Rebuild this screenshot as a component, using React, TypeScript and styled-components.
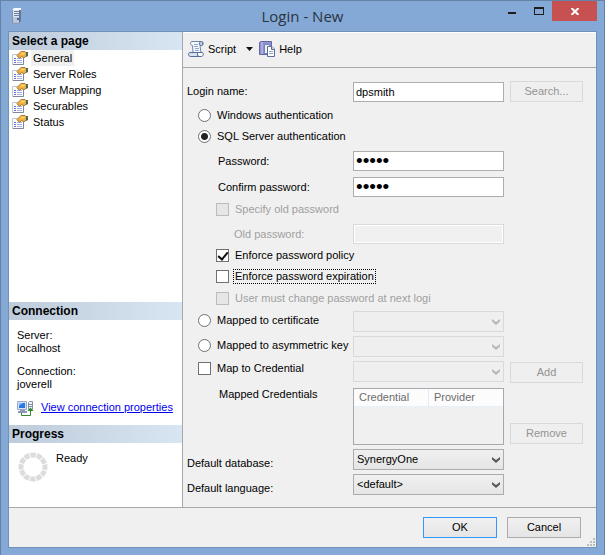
import React, { useState } from "react";
import styled, { createGlobalStyle, css } from "styled-components";

const GlobalStyle = createGlobalStyle`
  * { box-sizing: border-box; }
  body {
    margin: 0;
    background: #84a9d6;
    font-family: "Liberation Sans", Arial, sans-serif;
    font-size: 11px;
    line-height: 13px;
    color: #000;
  }
  button, input, select { font: inherit; color: inherit; margin: 0; }
  svg { flex: none; }
`;

const Window = styled.main`
  display: flex;
  flex-direction: column;
  min-height: 100vh;
  padding: 0 7px 7px;
  background: #84a9d6;
  border: 1px solid #6583a8;
`;

const TitleBar = styled.header`
  display: grid;
  grid-template-columns: 1fr auto 1fr;
  height: 30px;
`;

const AppIcon = styled.div`
  padding: 6px 0 0 4px;
`;

const Title = styled.h1`
  margin: 0;
  font: 400 15px/30px "Open Sans", "Noto Sans", sans-serif;
  color: #2b3440;
`;

const Controls = styled.div`
  display: flex;
  justify-content: flex-end;
  align-items: flex-start;
`;

const ControlButton = styled.button<{ $close?: boolean }>`
  display: grid;
  place-items: center;
  width: ${(p) => (p.$close ? 45 : 27)}px;
  height: 20px;
  padding: 0;
  border: 0;
  background: ${(p) => (p.$close ? "#c75050" : "transparent")};
`;

const Client = styled.div`
  flex: 1;
  display: flex;
  flex-direction: column;
  background: #f0f0f0;
  border: 1px solid #7191b8;
`;

const Body = styled.div`
  flex: 1;
  display: grid;
  grid-template-columns: 174px 1fr;
  border-bottom: 1px solid #a7a7ae;
`;

const Sidebar = styled.aside`
  display: flex;
  flex-direction: column;
  background: #fff;
  border-right: 1px solid #a7a7ae;
`;

const SectionHead = styled.h2`
  margin: 0;
  padding-left: 3px;
  font-size: 12px;
  font-weight: 700;
  line-height: 18px;
  background: linear-gradient(90deg, #bdcbda, #d8e6f4);
`;

const PageList = styled.ul`
  flex: 1;
  margin: 0;
  padding: 0 0 0 3px;
  list-style: none;
`;

const PageItem = styled.li`
  display: flex;
  gap: 3px;
  height: 16px;
`;

const PageButton = styled.button<{ $active?: boolean }>`
  padding: 0 2px;
  border: 0;
  line-height: 16px;
  background: ${(p) => (p.$active ? "#f0f0f0" : "transparent")};
`;

const ConnectionInfo = styled.div`
  height: 105px;
  padding: 9px 8px 0;
`;

const Pair = styled.dl`
  margin: 0 0 10px;
  dd { margin: 0; }
`;

const LinkRow = styled.div`
  display: flex;
  gap: 7px;
  white-space: nowrap;
`;

const PropsLink = styled.a`
  color: #0000f0;
`;

const ProgressInfo = styled.div`
  display: flex;
  gap: 8px;
  height: 64px;
  padding: 9px 9px 0;
`;

const Panel = styled.section`
  display: flex;
  flex-direction: column;
`;

const Toolbar = styled.div`
  display: flex;
  align-items: center;
  height: 36px;
  padding: 0 5px 2px;
  border-top: 1px solid #fff;
  border-bottom: 1px solid #a7a7ae;
`;

const ToolButton = styled.button`
  display: flex;
  align-items: center;
  gap: 4px;
  padding: 0;
  border: 0;
  background: transparent;
`;

const DropButton = styled(ToolButton)`
  margin: 0 6px 0 10px;
`;

const Form = styled.form`
  padding: 10px 13px 10px 4px;
`;

const FormRow = styled.div<{ $h: number; $gap?: number; $top?: boolean }>`
  display: grid;
  grid-template-columns: 166px minmax(0, 1fr) 79px;
  align-items: ${(p) => (p.$top ? "start" : "center")};
  min-height: ${(p) => p.$h}px;
  margin-top: ${(p) => p.$gap ?? 0}px;
`;

const Label = styled.label<{ $indent?: number; $drop?: number; $off?: boolean }>`
  padding: ${(p) => p.$drop ?? 0}px 0 0 ${(p) => p.$indent ?? 0}px;
  color: ${(p) => (p.$off ? "#a0a0a0" : "#000")};
`;

const Choice = styled.label<{ $indent: number; $drop?: number; $off?: boolean; $wide?: boolean }>`
  display: flex;
  align-items: center;
  gap: 4px;
  padding: ${(p) => p.$drop ?? 0}px 0 0 ${(p) => p.$indent}px;
  white-space: nowrap;
  color: ${(p) => (p.$off ? "#a0a0a0" : "#000")};
  ${(p) => p.$wide && css`grid-column: 1 / 3;`}
`;

const ChoiceText = styled.span<{ $focus?: boolean }>`
  padding: 0 1px;
  border: 1px ${(p) => (p.$focus ? "dotted #000" : "solid transparent")};
`;

const Radio = styled.input.attrs({ type: "radio" })`
  appearance: none;
  flex: none;
  width: 13px;
  height: 13px;
  border: 1px solid #707070;
  border-radius: 50%;
  background: #fff;
  &:checked { background: radial-gradient(circle, #222 0 3px, #fff 4px); }
`;

const Check = styled.input.attrs({ type: "checkbox" })`
  appearance: none;
  flex: none;
  display: grid;
  place-items: center;
  width: 13px;
  height: 13px;
  border: 1px solid #707070;
  background: #fff;
  &:disabled { border-color: #bcbcbc; background: #e6e6e6; }
  &:checked::after {
    content: "";
    width: 4px;
    height: 8px;
    margin-bottom: 2px;
    border: solid #111;
    border-width: 0 2px 2px 0;
    transform: rotate(40deg);
  }
`;

const TextBox = styled.input`
  width: 100%;
  height: 20px;
  padding: 0 2px;
  border: 1px solid #abadb3;
  background: #fff;
  &[type="password"] { font-size: 19px; }
  &:disabled {
    border-color: #d9d9d9;
    background: #f0f0f0;
    box-shadow: inset 0 0 0 1px #fff;
  }
`;

const SelectWrap = styled.div`
  position: relative;
  svg {
    position: absolute;
    right: 4px;
    top: 8px;
    pointer-events: none;
  }
`;

const SelectBox = styled.select`
  appearance: none;
  display: block;
  width: 100%;
  height: 21px;
  padding: 0 18px 0 3px;
  border: 1px solid #acacac;
  border-radius: 0;
  background: linear-gradient(#f0f0f0, #e5e5e5);
  &:disabled { border-color: #d9d9d9; background: #efefef; opacity: 1; }
`;

const Button = styled.button<{ $primary?: boolean }>`
  height: 21px;
  padding: 0;
  border: 1px solid ${(p) => (p.$primary ? "#3399ff" : "#acacac")};
  background: linear-gradient(#f0f0f0, #e5e5e5);
  &:disabled { border-color: #d9d9d9; background: #efefef; color: #939393; }
`;

const SideButton = styled(Button)<{ $drop?: number }>`
  margin-left: 6px;
  margin-top: ${(p) => p.$drop ?? 0}px;
`;

const ListBox = styled.div`
  height: 57px;
  border: 1px solid #a7a7ae;
`;

const ListTable = styled.table`
  width: 100%;
  border-collapse: collapse;
  table-layout: fixed;
  th {
    height: 17px;
    padding: 0 5px;
    font-weight: 400;
    text-align: left;
    color: #6d6d6d;
    background: #fcfcfc;
    border-bottom: 1px solid #e5f0fb;
  }
  th + th { border-left: 1px solid #e0ebf7; }
`;

const Footer = styled.footer`
  display: flex;
  justify-content: flex-end;
  gap: 10px;
  height: 39px;
  padding: 9px 1px 1px 0;
`;

const FooterButton = styled(Button)`
  width: 74px;
`;

const Grip = styled.svg`
  align-self: flex-end;
  margin-left: -4px;
`;

const ServerIcon = () => (
  <svg width="16" height="18" viewBox="0 0 16 18" aria-hidden="true">
    <path d="M1 3l2-2h6v13l-2 2H1z" fill="#65758f" />
    <path d="M1 3h6v13H1z" fill="#dfe7f2" />
    <path d="M0 3l2-2h7v2z" fill="#f7faff" />
    <path d="M2 4.500h5M2 6.500h5M2 8.500h5" stroke="#7183a2" />
    <path d="M1 10h6v5H1z" fill="#bac6dd" />
    <path d="M5 11h2v2H5z" fill="#4568a5" />
    <path d="M.5 3v13h7" fill="none" stroke="#8491ab" />
  </svg>
);

const PageIcon = () => (
  <svg width="16" height="16" viewBox="0 0 16 16" aria-hidden="true">
    <path d="M.5 4.500h11v10H.5z" fill="#fff" stroke="#c0c5d2" />
    <path d="M2 8h2v1H2zM2 10h2v1H2zM2 12h2v1H2z" fill="#5a6cd0" />
    <path d="M5 8.500h5M5 10.500h5M5 12.500h5" stroke="#a5b0e0" />
    <path d="M11.500 8v6.500H1" fill="none" stroke="#8088a0" />
    <path d="M5 5.500l4-4h4l1.500 1.500v2.500L12 8 10 6.500 7.500 8 6 7z" fill="#f0b040" stroke="#a87a3a" />
    <path d="M8 4l2-1.500h2.500l.5 1.500-3 1z" fill="#ffd060" />
    <path d="M14 2h2v4l-2 1z" fill="#4c6b4c" />
  </svg>
);

const ScriptIcon = () => (
  <svg width="16" height="16" viewBox="0 0 16 16" aria-hidden="true">
    <path d="M4 .5h9.500c2.500 0 2.500 4 0 4H12l1 7H5L4.500 4.500C2 4.500 2 .5 4 .5z" fill="#f5f8fd" stroke="#7484a7" />
    <path d="M12 .5c-1 1-.5 4 0 4h2c1-1 .5-4-.5-4z" fill="#c2cde3" stroke="#64759b" />
    <path d="M6 3.500h4M6 5.500h4M7 7.500h4M7 9.500h4" stroke="#8fa6d5" />
    <path d="M2 11.500h8c-1 1-.5 4 1 4H2.500c-2.500 0-2.500-4-.5-4z" fill="#d8e1f0" stroke="#556a99" />
    <path d="M10 11.500h4c2 0 1.500 4-.5 4H11c-1.500 0-2-3-1-4z" fill="#fff" stroke="#556a99" />
  </svg>
);

const HelpIcon = () => (
  <svg width="16" height="16" viewBox="0 0 16 16" aria-hidden="true">
    <path d="M.5 1.500L2 .5h10.500v13H.5z" fill="#8f91cf" stroke="#6366a4" />
    <path d="M3 1v12" stroke="#c7c9ef" />
    <path d="M5.500 3.500h4l2 2v7h-6z" fill="#edf1fb" stroke="#7585ad" />
    <path d="M8.500 5.500H13l2.500 2.500v7.500h-7z" fill="#fff" stroke="#5c6f9b" />
    <path d="M12.500 5.500v3h3" fill="#cad6ec" stroke="#5c6f9b" />
    <path d="M10 10.500h4M10 12.500h4" stroke="#8da3d2" />
  </svg>
);

const ConnectionIcon = () => (
  <svg width="17" height="16" viewBox="0 0 17 16" aria-hidden="true">
    <path d="M.5.5h9v8h-9z" fill="#d9e2f2" stroke="#9aa9c7" />
    <path d="M2 2h6v5H2z" fill="#2677e6" />
    <path d="M2 2h4L2 5z" fill="#79b5ff" />
    <path d="M1 10h9v2H1zM3 9h5v1H3z" fill="#8c98b8" />
    <path d="M11.500 1.500l1-1h3v8h-4z" fill="#edf1f8" stroke="#8390ac" />
    <path d="M12 3.500h3M12 5.500h3" stroke="#8390ac" />
    <path d="M4.500 12v2.500h9V8" fill="none" stroke="#2e8a2a" />
    <path d="M10.500 10l3-3.500 3 3.500z" fill="#2e8a2a" />
  </svg>
);

const Spinner = () => (
  <svg width="30" height="30" viewBox="0 0 30 30" aria-hidden="true">
    <circle cx="15" cy="15" r="12" fill="none" stroke="#dcdcdc" strokeWidth="5" pathLength="120" strokeDasharray="8.500 1.500" strokeDashoffset="4" />
  </svg>
);

const Chevron = ({ off }: { off?: boolean }) => (
  <svg width="8" height="6" viewBox="0 0 8 6" aria-hidden="true">
    <path d="M0 0l4 3 4-3v2.500L4 6 0 2.500z" fill={off ? "#b8b8b8" : "#5a5a5a"} />
  </svg>
);

type DropProps = { id: string; name?: string; options?: string[] };

const DropDown = ({ id, name, options = [] }: DropProps) => (
  <SelectWrap>
    <SelectBox id={id} aria-label={name} disabled={options.length === 0}>
      {options.map((o) => (
        <option key={o}>{o}</option>
      ))}
    </SelectBox>
    <Chevron off={options.length === 0} />
  </SelectWrap>
);

const pages = ["General", "Server Roles", "User Mapping", "Securables", "Status"];

export default function App() {
  const [page, setPage] = useState("General");
  const [mode, setMode] = useState("sql");

  return (
    <>
      <GlobalStyle />
      <Window>
        <TitleBar>
          <AppIcon><ServerIcon /></AppIcon>
          <Title>Login - New</Title>
          <Controls>
            <ControlButton aria-label="Minimize">
              <svg width="8" height="8"><path d="M0 5h8v2H0z" fill="#1e1e1e" /></svg>
            </ControlButton>
            <ControlButton aria-label="Maximize">
              <svg width="10" height="8"><path d="M0 0h10v8H0zM1 2v5h8V2z" fill="#1e1e1e" fillRule="evenodd" /></svg>
            </ControlButton>
            <ControlButton $close aria-label="Close">
              <svg width="8" height="7"><path d="M.5 0l7 7M7.500 0l-7 7" stroke="#fff" strokeWidth="2" /></svg>
            </ControlButton>
          </Controls>
        </TitleBar>
        <Client>
          <Body>
            <Sidebar>
              <SectionHead>Select a page</SectionHead>
              <PageList>
                {pages.map((p) => (
                  <PageItem key={p}>
                    <PageIcon />
                    <PageButton $active={p === page} onClick={() => setPage(p)}>{p}</PageButton>
                  </PageItem>
                ))}
              </PageList>
              <SectionHead>Connection</SectionHead>
              <ConnectionInfo>
                <Pair><dt>Server:</dt><dd>localhost</dd></Pair>
                <Pair><dt>Connection:</dt><dd>joverell</dd></Pair>
                <LinkRow>
                  <ConnectionIcon />
                  <PropsLink href="#properties">View connection properties</PropsLink>
                </LinkRow>
              </ConnectionInfo>
              <SectionHead>Progress</SectionHead>
              <ProgressInfo>
                <Spinner />
                <span>Ready</span>
              </ProgressInfo>
            </Sidebar>
            <Panel>
              <Toolbar>
                <ToolButton><ScriptIcon />Script</ToolButton>
                <DropButton aria-label="Script options">
                  <svg width="7" height="4"><path d="M0 0h7L3.500 4z" fill="#111" /></svg>
                </DropButton>
                <ToolButton><HelpIcon />Help</ToolButton>
              </Toolbar>
              <Form onSubmit={(e) => e.preventDefault()}>
                <FormRow $h={27}>
                  <Label htmlFor="login">Login name:</Label>
                  <TextBox id="login" defaultValue="dpsmith" />
                  <SideButton type="button" disabled>Search...</SideButton>
                </FormRow>
                <FormRow $h={21}>
                  <Choice $indent={11} $wide>
                    <Radio name="mode" checked={mode === "win"} onChange={() => setMode("win")} />
                    <ChoiceText>Windows authentication</ChoiceText>
                  </Choice>
                </FormRow>
                <FormRow $h={21}>
                  <Choice $indent={11} $wide>
                    <Radio name="mode" checked={mode === "sql"} onChange={() => setMode("sql")} />
                    <ChoiceText>SQL Server authentication</ChoiceText>
                  </Choice>
                </FormRow>
                <FormRow $h={26} $gap={1}>
                  <Label htmlFor="pw" $indent={31}>Password:</Label>
                  <TextBox id="pw" type="password" defaultValue="abcde" />
                </FormRow>
                <FormRow $h={26}>
                  <Label htmlFor="pw2" $indent={31}>Confirm password:</Label>
                  <TextBox id="pw2" type="password" defaultValue="abcde" />
                </FormRow>
                <FormRow $h={18}>
                  <Choice $indent={29} $wide $off>
                    <Check disabled />
                    <ChoiceText>Specify old password</ChoiceText>
                  </Choice>
                </FormRow>
                <FormRow $h={22} $gap={5}>
                  <Label htmlFor="old" $indent={47} $off>Old password:</Label>
                  <TextBox id="old" disabled />
                </FormRow>
                <FormRow $h={21}>
                  <Choice $indent={29} $wide>
                    <Check defaultChecked />
                    <ChoiceText>Enforce password policy</ChoiceText>
                  </Choice>
                </FormRow>
                <FormRow $h={21}>
                  <Choice $indent={29} $wide>
                    <Check />
                    <ChoiceText $focus>Enforce password expiration</ChoiceText>
                  </Choice>
                </FormRow>
                <FormRow $h={22}>
                  <Choice $indent={29} $wide $off>
                    <Check disabled />
                    <ChoiceText>User must change password at next logi</ChoiceText>
                  </Choice>
                </FormRow>
                <FormRow $h={23} $gap={2} $top>
                  <Choice $indent={11} $drop={2}>
                    <Radio name="mode" checked={mode === "cert"} onChange={() => setMode("cert")} />
                    <ChoiceText>Mapped to certificate</ChoiceText>
                  </Choice>
                  <DropDown id="cert" name="Certificate" />
                </FormRow>
                <FormRow $h={23} $gap={2} $top>
                  <Choice $indent={11} $drop={2}>
                    <Radio name="mode" checked={mode === "key"} onChange={() => setMode("key")} />
                    <ChoiceText>Mapped to asymmetric key</ChoiceText>
                  </Choice>
                  <DropDown id="key" name="Asymmetric key" />
                </FormRow>
                <FormRow $h={23} $gap={2} $top>
                  <Choice $indent={11}>
                    <Check />
                    <ChoiceText>Map to Credential</ChoiceText>
                  </Choice>
                  <DropDown id="cred" name="Credential" />
                  <SideButton type="button" disabled $drop={1}>Add</SideButton>
                </FormRow>
                <FormRow $h={59} $gap={4} $top>
                  <Label as="span" $indent={32}>Mapped Credentials</Label>
                  <ListBox>
                    <ListTable>
                      <thead><tr><th>Credential</th><th>Provider</th></tr></thead>
                    </ListTable>
                  </ListBox>
                  <SideButton type="button" disabled $drop={35}>Remove</SideButton>
                </FormRow>
                <FormRow $h={25}>
                  <Label htmlFor="db" $drop={8}>Default database:</Label>
                  <DropDown id="db" options={["SynergyOne"]} />
                </FormRow>
                <FormRow $h={25}>
                  <Label htmlFor="lang" $drop={8}>Default language:</Label>
                  <DropDown id="lang" options={["<default>"]} />
                </FormRow>
              </Form>
            </Panel>
          </Body>
          <Footer>
            <FooterButton $primary>OK</FooterButton>
            <FooterButton>Cancel</FooterButton>
            <Grip width="8" height="8" aria-hidden="true">
              <path d="M6 0h2v2H6zM3 3h2v2H3zM6 3h2v2H6zM0 6h2v2H0zM3 6h2v2H3zM6 6h2v2H6z" fill="#bcbcbc" />
            </Grip>
          </Footer>
        </Client>
      </Window>
    </>
  );
}
